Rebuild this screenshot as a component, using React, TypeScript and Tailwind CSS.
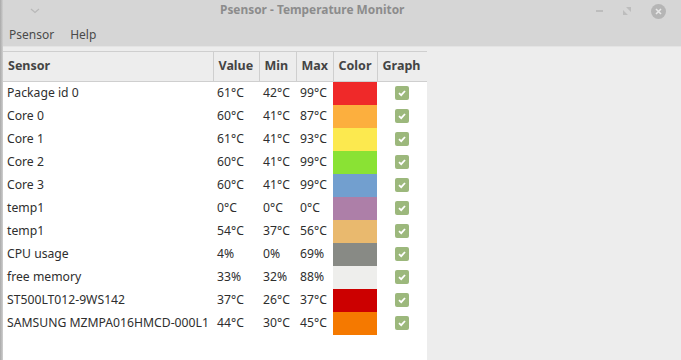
import React from "react";

interface Row {
  name: string;
  value: string;
  min: string;
  max: string;
  color: string;
}

const rows: Row[] = [
  { name: "Package id 0", value: "61°C", min: "42°C", max: "99°C", color: "bg-[#ef2929]" },
  { name: "Core 0", value: "60°C", min: "41°C", max: "87°C", color: "bg-[#fcaf3e]" },
  { name: "Core 1", value: "61°C", min: "41°C", max: "93°C", color: "bg-[#fce94f]" },
  { name: "Core 2", value: "60°C", min: "41°C", max: "99°C", color: "bg-[#8ae234]" },
  { name: "Core 3", value: "60°C", min: "41°C", max: "99°C", color: "bg-[#729fcf]" },
  { name: "temp1", value: "0°C", min: "0°C", max: "0°C", color: "bg-[#ad7fa8]" },
  { name: "temp1", value: "54°C", min: "37°C", max: "56°C", color: "bg-[#e9b96e]" },
  { name: "CPU usage", value: "4%", min: "0%", max: "69%", color: "bg-[#888a85]" },
  { name: "free memory", value: "33%", min: "32%", max: "88%", color: "bg-[#eeeeec]" },
  { name: "ST500LT012-9WS142", value: "37°C", min: "26°C", max: "37°C", color: "bg-[#cc0000]" },
  { name: "SAMSUNG MZMPA016HMCD-000L1", value: "44°C", min: "30°C", max: "45°C", color: "bg-[#f57900]" },
];

function Check() {
  return (
    <span className="flex h-[14px] w-[14px] items-center justify-center rounded-[2px] bg-[#9cb87c]">
      <svg width="10" height="10" viewBox="0 0 10 10">
        <path d="M2 5.2 L4.2 7.2 L8 3" fill="none" stroke="white" strokeWidth="1.8" />
      </svg>
    </span>
  );
}

export default function App() {
  return (
    <div
      className="relative h-[360px] w-[681px] overflow-hidden bg-[#ededed] text-[12.2px] text-[#2e2e2e]"
      style={{ fontFamily: '"Noto Sans", "Open Sans", sans-serif' }}
    >
      {/* title bar */}
      <div className="flex h-[22px] items-center bg-[#d6d6d6] pl-[30px] pr-[14px]">
        <svg width="10" height="6" viewBox="0 0 10 6" className="mr-auto">
          <path d="M1 1 L5 4.5 L9 1" fill="none" stroke="#b8b8b8" strokeWidth="1.2" />
        </svg>
        <span className="absolute left-[220px] top-[1px] text-[11.9px] font-bold text-[#8c8c8c]">
          Psensor - Temperature Monitor
        </span>
        <div className="flex items-center gap-[20px] pr-[1px]">
          <span className="h-[2px] w-[7px] bg-[#bdbdbd]" />
          <svg width="8" height="8" viewBox="0 0 8 8">
            <path d="M3 0 H8 V5 Z M0 3 V8 H5 Z" fill="#bdbdbd" />
          </svg>
          <span className="flex h-[15px] w-[15px] items-center justify-center rounded-full bg-[#b5b5b5]">
            <svg width="7" height="7" viewBox="0 0 7 7">
              <path d="M1 1 L6 6 M6 1 L1 6" stroke="#e8e8e8" strokeWidth="1.6" />
            </svg>
          </span>
        </div>
      </div>
      {/* menu bar */}
      <div className="flex h-[24px] items-center gap-[16px] bg-[#d6d6d6] pl-[9px] pt-[2px] text-[12px] text-[#4a4a4a]">
        <span>Psensor</span>
        <span>Help</span>
      </div>
      <div className="h-[1px] bg-[#e4e4e4]" />
      <div className="flex pl-[3px] pt-[4px]">
        <div className="w-[424px] bg-white">
          <table className="w-full table-fixed border-collapse">
            <colgroup>
              <col className="w-[210px]" />
              <col className="w-[46px]" />
              <col className="w-[37px]" />
              <col className="w-[37px]" />
              <col className="w-[44px]" />
              <col className="w-[50px]" />
            </colgroup>
            <thead>
              <tr className="h-[30px] border-t border-b border-[#cfcfcf] bg-[#ededed] text-left text-[12.5px] text-[#444]">
                <th className="border-r border-[#cfcfcf] pl-[5px] font-bold">Sensor</th>
                <th className="border-r border-[#cfcfcf] pl-[5px] font-bold">Value</th>
                <th className="border-r border-[#cfcfcf] pl-[5px] font-bold">Min</th>
                <th className="border-r border-[#cfcfcf] pl-[5px] font-bold">Max</th>
                <th className="border-r border-[#cfcfcf] pl-[5px] font-bold">Color</th>
                <th className="pl-[5px] font-bold">Graph</th>
              </tr>
            </thead>
            <tbody>
              {rows.map((r, i) => (
                <tr key={i} className="h-[23px]">
                  <td className="whitespace-nowrap pl-[4px]">{r.name}</td>
                  <td className="pl-[4px]">{r.value}</td>
                  <td className="pl-[4px]">{r.min}</td>
                  <td className="pl-[4px]">{r.max}</td>
                  <td className={`${r.color} p-0`} />
                  <td>
                    <div className="flex justify-center">
                      <Check />
                    </div>
                  </td>
                </tr>
              ))}
            </tbody>
          </table>
          <div className="h-[40px]" />
        </div>
      </div>
      <div className="absolute left-0 top-0 h-full w-[3px] bg-gradient-to-r from-[#a9a9a9] to-[#d0d0d0]" />
    </div>
  );
}
